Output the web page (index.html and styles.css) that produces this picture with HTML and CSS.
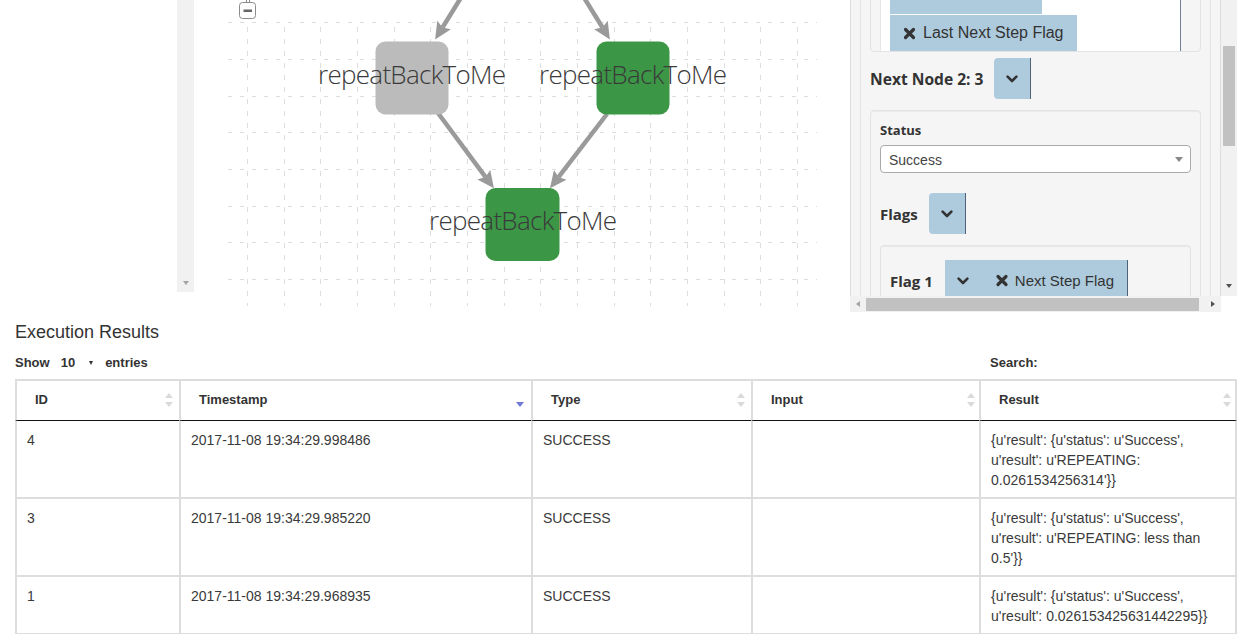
FILE: index.html
```html
<!DOCTYPE html>
<html>
<head>
<meta charset="utf-8">
<title>Execution</title>
<link rel="stylesheet" href="styles.css">
</head>
<body>
<div class="top">
  <div class="left-pane">
    <div class="left-space"></div>
    <div class="sb-left"><span class="tri-down"></span></div>
  </div>

  <div class="graph">
    <svg width="656" height="312" viewBox="194 0 656 312" xmlns="http://www.w3.org/2000/svg">
      <defs>
        <marker id="ah" markerUnits="userSpaceOnUse" markerWidth="17" markerHeight="16" viewBox="0 0 17 16" refX="3" refY="8" orient="auto">
          <path d="M0 0 L17 8 L0 16 L3 8 Z" fill="#9a9a9a"/>
        </marker>
      </defs>
      <g class="grid-h" stroke="#dddddd" stroke-width="1" stroke-dasharray="4 8">
        <line x1="228" y1="22.5" x2="817" y2="22.5"/>
        <line x1="228" y1="59.5" x2="817" y2="59.5"/>
        <line x1="228" y1="96.5" x2="817" y2="96.5"/>
        <line x1="228" y1="132.5" x2="817" y2="132.5"/>
        <line x1="228" y1="169.5" x2="817" y2="169.5"/>
        <line x1="228" y1="206.5" x2="817" y2="206.5"/>
        <line x1="228" y1="242.5" x2="817" y2="242.5"/>
        <line x1="228" y1="279.5" x2="817" y2="279.5"/>
      </g>
      <g class="grid-v" stroke="#dddddd" stroke-width="1" stroke-dasharray="5 7">
        <line x1="247.5" y1="27" x2="247.5" y2="306"/>
        <line x1="284.5" y1="27" x2="284.5" y2="306"/>
        <line x1="320.5" y1="27" x2="320.5" y2="306"/>
        <line x1="357.5" y1="27" x2="357.5" y2="306"/>
        <line x1="394.5" y1="27" x2="394.5" y2="306"/>
        <line x1="430.5" y1="27" x2="430.5" y2="306"/>
        <line x1="467.5" y1="27" x2="467.5" y2="306"/>
        <line x1="504.5" y1="27" x2="504.5" y2="306"/>
        <line x1="540.5" y1="27" x2="540.5" y2="306"/>
        <line x1="577.5" y1="27" x2="577.5" y2="306"/>
        <line x1="614.5" y1="27" x2="614.5" y2="306"/>
        <line x1="650.5" y1="27" x2="650.5" y2="306"/>
        <line x1="687.5" y1="27" x2="687.5" y2="306"/>
        <line x1="724.5" y1="27" x2="724.5" y2="306"/>
        <line x1="760.5" y1="27" x2="760.5" y2="306"/>
        <line x1="797.5" y1="27" x2="797.5" y2="306"/>
      </g>
      <g stroke="#9a9a9a" stroke-width="4.5" marker-end="url(#ah)">
        <line x1="462" y1="-4" x2="442.5" y2="27.5"/>
        <line x1="583" y1="-4" x2="602.5" y2="27.5"/>
        <line x1="438" y1="113" x2="485.6" y2="177.1"/>
        <line x1="607" y1="114" x2="558.5" y2="177.2"/>
      </g>
      <rect x="375.5" y="41.5" width="73" height="73" rx="10" fill="#bbbbbb"/>
      <rect x="596.5" y="41.5" width="73" height="73" rx="10" fill="#3b9646"/>
      <rect x="485.5" y="188" width="74" height="73" rx="10" fill="#3b9646"/>
      <text class="node-label" x="412" y="83.5" text-anchor="middle" textLength="188">repeatBackToMe</text>
      <text class="node-label" x="633" y="83.5" text-anchor="middle" textLength="188">repeatBackToMe</text>
      <text class="node-label" x="523" y="230" text-anchor="middle" textLength="188">repeatBackToMe</text>
      <path d="M246.5 0 V2.5 M249.5 0 V2.5" stroke="#8a8a8a" stroke-width="1"/>
      <rect x="239.5" y="2.5" width="16" height="16" rx="3" fill="#ffffff" stroke="#8a8a8a"/>
      <rect x="243.5" y="9.5" width="8.5" height="2.5" fill="#666666"/>
    </svg>
  </div>

  <div class="props">
    <div class="viewport">
      <div class="level-a">
        <div class="well well-top">
          <div class="tagbox">
            <span class="tag tag-first"><svg class="xi" width="13" height="13" viewBox="0 0 13 13"><path d="M2.5 2.5 L10.5 10.5 M10.5 2.5 L2.5 10.5" stroke="#333" stroke-width="3.2" stroke-linecap="round"/></svg>Next Step Flag</span>
            <span class="tag"><svg class="xi" width="13" height="13" viewBox="0 0 13 13"><path d="M2.5 2.5 L10.5 10.5 M10.5 2.5 L2.5 10.5" stroke="#333" stroke-width="3.2" stroke-linecap="round"/></svg>Last Next Step Flag</span>
          </div>
        </div>

        <div class="field-row next-row">
          <span class="lbl lbl-lg">Next Node 2: 3</span>
          <span class="dd-btn"><svg width="12" height="8" viewBox="0 0 12 8"><path d="M1.6 1.6 L6 6 L10.4 1.6" fill="none" stroke="#333" stroke-width="2.6" stroke-linecap="round" stroke-linejoin="round"/></svg></span>
        </div>

        <div class="well well-status">
          <div class="lbl lbl-sm">Status</div>
          <div class="select"><span>Success</span><span class="tri-sel"></span></div>
          <div class="field-row flags-row">
            <span class="lbl">Flags</span>
            <span class="dd-btn"><svg width="12" height="8" viewBox="0 0 12 8"><path d="M1.6 1.6 L6 6 L10.4 1.6" fill="none" stroke="#333" stroke-width="2.6" stroke-linecap="round" stroke-linejoin="round"/></svg></span>
          </div>
          <div class="well inner-well">
            <div class="field-row flag-row">
              <span class="lbl">Flag 1</span>
              <span class="flag-btn">
                <span class="chev-part"><svg width="12" height="8" viewBox="0 0 12 8"><path d="M1.6 1.6 L6 6 L10.4 1.6" fill="none" stroke="#333" stroke-width="2.6" stroke-linecap="round" stroke-linejoin="round"/></svg></span>
                <span class="tag-part"><svg class="xi" width="14" height="13" viewBox="0 0 13 13"><path d="M2.5 2.5 L10.5 10.5 M10.5 2.5 L2.5 10.5" stroke="#333" stroke-width="3.2" stroke-linecap="round"/></svg>Next Step Flag</span>
              </span>
            </div>
          </div>
        </div>
      </div>
    </div>
    <div class="vsb"><div class="thumb"></div><span class="tri-down dark"></span></div>
    <div class="hsb">
      <span class="sbtn"><span class="tri-left"></span></span>
      <div class="thumb"></div>
      <span class="sbtn right"><span class="tri-right"></span></span>
    </div>
    <div class="corner"></div>
  </div>
</div>

<div class="results">
  <h3 class="results-title">Execution Results</h3>
  <div class="dt-toolbar">
    <div class="dt-length"><span>Show</span><span class="len-val">10</span><span class="len-caret"></span><span class="len-entries">entries</span></div>
    <div class="dt-filter">Search:</div>
  </div>
  <table class="dt">
    <colgroup>
      <col class="w1"><col class="w2"><col class="w3"><col class="w4"><col class="w5">
    </colgroup>
    <thead>
      <tr>
        <th class="c-id"><div class="th-in"><span>ID</span><svg width="8" height="14" viewBox="0 0 8 14"><path d="M4 0 L8 5 H0 Z M0 9 H8 L4 14 Z" fill="#dadada"/></svg></div></th>
        <th class="c-ts"><div class="th-in"><span>Timestamp</span><svg width="8" height="14" viewBox="0 0 8 14"><path d="M0 9 H8 L4 14 Z" fill="#6f79d9"/></svg></div></th>
        <th class="c-ty"><div class="th-in"><span>Type</span><svg width="8" height="14" viewBox="0 0 8 14"><path d="M4 0 L8 5 H0 Z M0 9 H8 L4 14 Z" fill="#dadada"/></svg></div></th>
        <th class="c-in"><div class="th-in"><span>Input</span><svg width="8" height="14" viewBox="0 0 8 14"><path d="M4 0 L8 5 H0 Z M0 9 H8 L4 14 Z" fill="#dadada"/></svg></div></th>
        <th class="c-res"><div class="th-in"><span>Result</span><svg width="8" height="14" viewBox="0 0 8 14"><path d="M4 0 L8 5 H0 Z M0 9 H8 L4 14 Z" fill="#dadada"/></svg></div></th>
      </tr>
    </thead>
    <tbody>
      <tr>
        <td>4</td>
        <td>2017-11-08 19:34:29.998486</td>
        <td>SUCCESS</td>
        <td></td>
        <td>{u'result': {u'status': u'Success', u'result': u'REPEATING: 0.0261534256314'}}</td>
      </tr>
      <tr>
        <td>3</td>
        <td>2017-11-08 19:34:29.985220</td>
        <td>SUCCESS</td>
        <td></td>
        <td>{u'result': {u'status': u'Success', u'result': u'REPEATING: less than 0.5'}}</td>
      </tr>
      <tr>
        <td>1</td>
        <td>2017-11-08 19:34:29.968935</td>
        <td>SUCCESS</td>
        <td></td>
        <td>{u'result': {u'status': u'Success', u'result': 0.026153425631442295}}</td>
      </tr>
    </tbody>
  </table>
</div>
</body>
</html>
```

FILE: styles.css
```css
* { box-sizing: border-box; }
html { overflow: hidden; }
body {
  margin: 0;
  background: #ffffff;
  color: #333333;
  font-family: "Liberation Sans", Arial, sans-serif;
  font-size: 14px;
  line-height: 20px;
}

/* ---------- top row ---------- */
.top { display: flex; height: 312px; }

.left-pane { width: 194px; height: 292px; display: flex; }
.left-space { flex: 1; }
.sb-left {
  width: 17px;
  background: #f1f1f1;
  display: flex;
  flex-direction: column;
  align-items: center;
  justify-content: flex-end;
  padding-bottom: 7px;
}

.tri-down {
  width: 0; height: 0;
  border-left: 3.5px solid transparent;
  border-right: 3.5px solid transparent;
  border-top: 4px solid #a3a3a3;
}
.tri-down.dark { border-top-color: #505050; }
.tri-left {
  width: 0; height: 0;
  border-top: 3.5px solid transparent;
  border-bottom: 3.5px solid transparent;
  border-right: 4px solid #a3a3a3;
}
.tri-right {
  width: 0; height: 0;
  border-top: 3.5px solid transparent;
  border-bottom: 3.5px solid transparent;
  border-left: 4px solid #505050;
}

.graph { width: 656px; height: 312px; }
.graph svg { display: block; }
.node-label {
  font-family: "Open Sans", Lato, "Noto Sans", sans-serif;
  font-weight: 300;
  font-size: 26px;
  fill: #3a3a3a;
}

/* ---------- properties panel ---------- */
.props {
  width: 387px;
  height: 312px;
  display: grid;
  grid-template-columns: 371px 16px;
  grid-template-rows: 296px 16px;
}
.viewport {
  overflow: hidden;
  background: #f5f5f5;
  border-left: 1px solid #dcdcdc;
  border-right: 1px solid #dcdcdc;
}
.level-a {
  margin: -49px 9px 0;
  height: 420px;
  border-left: 1px solid #e3e3e3;
  border-right: 1px solid #e3e3e3;
  padding: 0 9px;
}
.well {
  background: #f5f5f5;
  border: 1px solid #e3e3e3;
  border-radius: 4px;
  box-shadow: inset 0 1px 1px rgba(0, 0, 0, 0.05);
}
.well-top { padding: 9px 9px 0; }
.tagbox {
  margin-right: 10px;
  background: #ffffff;
  border-left: 1px solid #e6e6e6;
  border-right: 1px solid #6f8296;
  padding: 17px 0 0 9px;
  display: flex;
  flex-wrap: wrap;
  row-gap: 1px;
}
.tag {
  height: 36px;
  display: inline-flex;
  align-items: center;
  gap: 7px;
  padding: 0 13px;
  background: #aecbdd;
  font-size: 16px;
  color: #333333;
  white-space: nowrap;
}
.tag-first { padding-bottom: 9px; }
.xi { display: block; flex: none; }

.field-row { display: flex; align-items: center; }
.lbl {
  font-family: "Open Sans", "Liberation Sans", sans-serif;
  font-weight: 700;
  font-size: 15px;
  line-height: 20px;
  color: #333333;
  white-space: nowrap;
}
.lbl-lg { font-size: 15.6px; }
.lbl-sm { font-size: 13px; line-height: 18px; margin-bottom: 6px; }

.next-row { margin-top: 6px; gap: 10px; }
.dd-btn {
  width: 37px;
  height: 41px;
  background: #aecbdd;
  border-right: 1px solid #4f6378;
  border-radius: 4px 0 0 4px;
  display: flex;
  align-items: center;
  justify-content: center;
}

.well-status { margin-top: 11px; padding: 10px 9px 30px; }
.select {
  height: 28px;
  background: #ffffff;
  border: 1px solid #aaaaaa;
  border-radius: 4px;
  display: flex;
  align-items: center;
  justify-content: space-between;
  padding: 1px 7px 0 8px;
  color: #444444;
  font-size: 14px;
}
.tri-sel {
  width: 0; height: 0;
  border-left: 4px solid transparent;
  border-right: 4px solid transparent;
  border-top: 5px solid #888888;
}
.flags-row { margin-top: 20px; gap: 11px; }
.inner-well { margin-top: 11px; padding: 14px 9px 30px; }
.flag-row { gap: 12px; }
.flag-btn {
  height: 41px;
  display: flex;
  align-items: center;
  background: #aecbdd;
  border-right: 1px solid #4f6378;
}
.chev-part { width: 36px; display: flex; justify-content: center; }
.tag-part {
  display: flex;
  align-items: center;
  gap: 6px;
  padding: 0 13px 0 14px;
  font-size: 15px;
  white-space: nowrap;
}

.vsb {
  background: #f1f1f1;
  display: flex;
  flex-direction: column;
  align-items: center;
  padding-bottom: 8px;
}
.vsb .thumb { width: 12px; height: 100px; margin-top: 46px; background: #c1c1c1; }
.vsb .tri-down { margin-top: auto; }
.hsb { background: #f1f1f1; display: flex; align-items: center; }
.sbtn { width: 16px; height: 16px; display: flex; align-items: center; justify-content: center; flex: none; }
.sbtn.right { margin-left: auto; }
.hsb .thumb { width: 333px; height: 13px; background: #c1c1c1; }
.corner { background: #ffffff; }

/* ---------- results ---------- */
.results { padding: 10px 16px 0 15px; }
.results-title {
  margin: 0;
  font-size: 18px;
  font-weight: 400;
  line-height: 21px;
  color: #333333;
}
.dt-toolbar {
  margin-top: 11px;
  display: flex;
  justify-content: space-between;
  font-size: 13px;
  font-weight: 700;
  line-height: 18px;
}
.dt-length { display: flex; align-items: center; }
.len-val { margin-left: 11px; }
.len-caret {
  margin-left: 14px;
  width: 0; height: 0;
  border-left: 2.5px solid transparent;
  border-right: 2.5px solid transparent;
  border-top: 4px solid #333333;
}
.len-entries { margin-left: 12px; }
.dt-filter { width: 247px; }

.dt {
  margin-top: 7px;
  width: 1222px;
  table-layout: fixed;
  border-collapse: separate;
  border-spacing: 0;
}
.w1 { width: 164px; }
.w2 { width: 352px; }
.w3 { width: 220px; }
.w4 { width: 228px; }
.w5 { width: 258px; }

.dt th {
  padding: 9px 6px 10px 18px;
  text-align: left;
  font-size: 13px;
  font-weight: 700;
  border-top: 2px solid #dddddd;
  border-left: 2px solid #dddddd;
  border-bottom: 1px solid #111111;
}
.dt th.c-ts { padding-right: 7px; }
.dt th.c-in, .dt th.c-res { padding-right: 4px; }
.dt th:last-child, .dt td:last-child { border-right: 2px solid #dddddd; }
.th-in { display: flex; justify-content: space-between; align-items: center; }
.th-in svg { display: block; flex: none; }
.dt td {
  padding: 9px 10px 7px;
  border-left: 2px solid #dddddd;
  border-bottom: 2px solid #dddddd;
  vertical-align: top;
  color: #3a3a3a;
}
```
